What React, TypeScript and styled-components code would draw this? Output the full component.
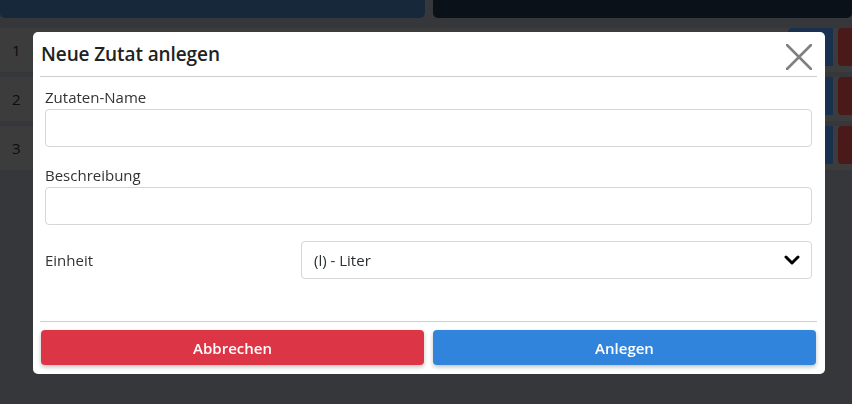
import React, { FC } from 'react'
import styled, { createGlobalStyle } from 'styled-components'

const GlobalStyle = createGlobalStyle`
  html,
  body {
    margin: 0;
    height: 100%;
    overflow: hidden;
    background: #6a6e74;
    font-family: 'Open Sans', 'Noto Sans', sans-serif;
  }
`

// page behind the dialog
const Page = styled.div`
  display: flex;
  flex-direction: column;
  width: 852px;
  height: 404px;
`

const TopBar = styled.div`
  display: grid;
  grid-template-columns: 425px 1fr;
  column-gap: 8px;
  height: 18px;
`

interface iTabProps {
  tone: string
}

const Tab = styled.div<iTabProps>`
  background: ${({ tone }) => tone};
  border-radius: 0 0 5px 5px;
`

const List = styled.div`
  display: flex;
  flex-direction: column;
  gap: 5px;
  padding-top: 10px;
  background: #6a6e74;
`

const ListRow = styled.div`
  display: flex;
  align-items: center;
  height: 44px;
  background: #787878;
  font-family: 'Open Sans', sans-serif;
  font-size: 15px;
  color: #1a1a1a;
`

const RowNum = styled.span`
  width: 34px;
  padding-left: 12px;
`

const RowActions = styled.div`
  margin-left: auto;
  display: flex;
  gap: 5px;
  height: 38px;
  align-self: flex-start;
`

interface iActionProps {
  tone: string
  w: number
}

const Action = styled.div<iActionProps>`
  width: ${({ w }) => w}px;
  background: ${({ tone }) => tone};
  border-radius: 4px 0 0 4px;
`

// dialog
const Backdrop = styled.div`
  position: fixed;
  inset: 0;
  background: rgba(0, 0, 0, 0.5);
`

const Dialog = styled.div`
  position: fixed;
  left: 33px;
  top: 32px;
  width: 792px;
  height: 342px;
  background: #fff;
  border-radius: 5px;
  display: flex;
  flex-direction: column;
`

const Header = styled.div`
  display: flex;
  align-items: center;
  justify-content: space-between;
  height: 45px;
  margin: 0 8px 0 7px;
  padding-left: 1px;
  border-bottom: 1px solid #cfcfcf;
  box-sizing: border-box;
`

const Title = styled.h2`
  margin: 0;
  font-size: 19px;
  font-weight: 600;
  color: #222;
  letter-spacing: -0.1px;
`

const Close = styled.button`
  border: 0;
  background: none;
  padding: 0;
  margin-right: 5px;
  margin-top: 6px;
  width: 26px;
  height: 26px;
  cursor: pointer;
`

const Body = styled.div`
  flex: 1;
  padding: 8px 13px 0 12px;
  display: flex;
  flex-direction: column;
`

const Field = styled.div`
  display: flex;
  flex-direction: column;
  margin-bottom: 16px;
`

const Label = styled.label`
  font-size: 15px;
  line-height: 24px;
  color: #333;
`

const Input = styled.input`
  box-sizing: border-box;
  height: 38px;
  border: 1px solid #d6d6d6;
  border-radius: 4px;
  padding: 0 12px;
  font: inherit;
`

const SelectRow = styled.div`
  display: grid;
  grid-template-columns: 256px 1fr;
  align-items: center;
`

const Select = styled.div`
  box-sizing: border-box;
  height: 38px;
  border: 1px solid #d6d6d6;
  border-radius: 4px;
  padding: 0 11px 0 12px;
  display: flex;
  align-items: center;
  justify-content: space-between;
  font-size: 15px;
  color: #2a2f33;
`

const Footer = styled.div`
  margin: 0 8px 0 7px;
  border-top: 1px solid #cfcfcf;
  padding: 8px 1px 9px 1px;
  display: grid;
  grid-template-columns: 1fr 1fr;
  column-gap: 9px;
`

interface iButtonProps {
  tone: string
}

const Button = styled.button<iButtonProps>`
  height: 35px;
  border: 0;
  border-radius: 4px;
  background: ${({ tone }) => tone};
  color: #fff;
  font-family: 'Open Sans', 'Noto Sans', sans-serif;
  font-size: 15px;
  font-weight: 600;
  box-shadow: 0 2px 4px rgba(0, 0, 0, 0.25);
  cursor: pointer;
`

const rows = [1, 2, 3]

const App: FC = () => (
  <>
    <GlobalStyle />
    <Page>
      <TopBar>
        <Tab tone="#2c5074" />
        <Tab tone="#162232" />
      </TopBar>
      <List>
        {rows.map((n) => (
          <ListRow key={n}>
            <RowNum>{n}</RowNum>
            <RowActions>
              <Action tone="#33609e" w={45} />
              <Action tone="#943434" w={14} />
            </RowActions>
          </ListRow>
        ))}
      </List>
    </Page>

    <Backdrop />
    <Dialog>
      <Header>
        <Title>Neue Zutat anlegen</Title>
        <Close aria-label="Schließen">
          <svg width="26" height="26" viewBox="0 0 26 26">
            <path d="M1 1 L25 25 M25 1 L1 25" stroke="#808080" strokeWidth="2.6" strokeLinecap="round" />
          </svg>
        </Close>
      </Header>

      <Body>
        <Field>
          <Label>Zutaten-Name</Label>
          <Input />
        </Field>
        <Field>
          <Label>Beschreibung</Label>
          <Input />
        </Field>
        <SelectRow>
          <Label>Einheit</Label>
          <Select>
            <span>(l) - Liter</span>
            <svg width="16" height="12" viewBox="0 0 16 12">
              <path d="M2 3 L8 9 L14 3" fill="none" stroke="#000" strokeWidth="3" strokeLinecap="round" strokeLinejoin="round" />
            </svg>
          </Select>
        </SelectRow>
      </Body>

      <Footer>
        <Button tone="#dc3545">Abbrechen</Button>
        <Button tone="#3184dc">Anlegen</Button>
      </Footer>
    </Dialog>
  </>
)

export default App
